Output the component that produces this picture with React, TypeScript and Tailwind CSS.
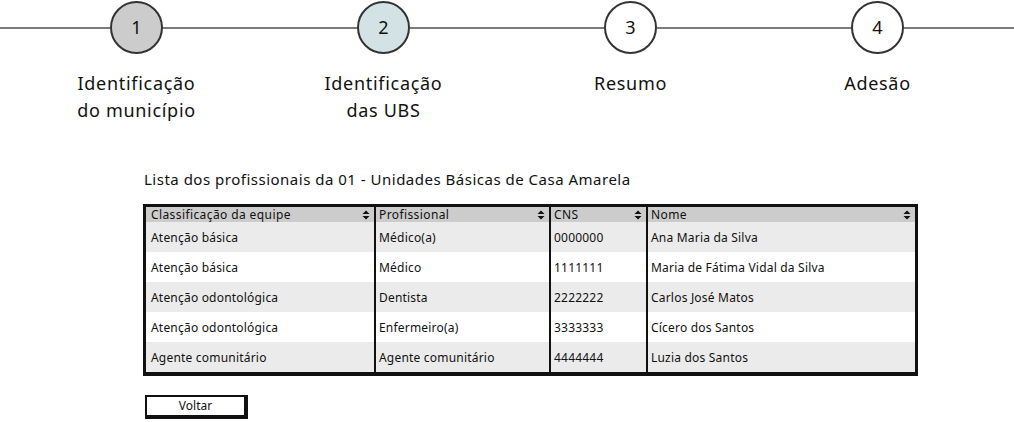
const steps = [
  { n: "1", label: ["Identificação", "do município"], fill: "bg-[#cccccc]" },
  { n: "2", label: ["Identificação", "das UBS"], fill: "bg-[#d3e3e5]" },
  { n: "3", label: ["Resumo"], fill: "bg-white" },
  { n: "4", label: ["Adesão"], fill: "bg-white" },
];

const rows = [
  ["Atenção básica", "Médico(a)", "0000000", "Ana Maria da Silva"],
  ["Atenção básica", "Médico", "1111111", "Maria de Fátima Vidal da Silva"],
  ["Atenção odontológica", "Dentista", "2222222", "Carlos José Matos"],
  ["Atenção odontológica", "Enfermeiro(a)", "3333333", "Cícero dos Santos"],
  ["Agente comunitário", "Agente comunitário", "4444444", "Luzia dos Santos"],
];

const cols = [
  { title: "Classificação da equipe", w: "w-[228px]", pad: "pl-[5px]" },
  { title: "Profissional", w: "w-[175px]", pad: "pl-[3px]" },
  { title: "CNS", w: "w-[97px]", pad: "pl-[3px]" },
  { title: "Nome", w: "flex-1", pad: "pl-[3px]" },
];

function SortIcon() {
  return (
    <svg width="8" height="10" viewBox="0 0 8 10" className="shrink-0">
      <path d="M4 0.5 L7.5 4 L0.5 4 Z" fill="#111" />
      <path d="M4 9.5 L7.5 6 L0.5 6 Z" fill="#111" />
    </svg>
  );
}

function Line() {
  return <div className="h-[2px] flex-1 bg-[#7a7a7a]" />;
}

export default function App() {
  const font = { fontFamily: '"Noto Sans", "DejaVu Sans", sans-serif' };
  return (
    <div className="h-[422px] w-[1014px] overflow-hidden bg-white text-[#111]" style={font}>
      <div className="flex h-[54px] items-center pt-[1px]">
        <div className="h-[2px] w-[110px] bg-[#7a7a7a]" />
        {steps.map((s, i) => (
          <div key={s.n} className="contents">
            <div className={`flex h-[53px] w-[53px] shrink-0 items-center justify-center rounded-full border-2 border-[#333] text-[18px] ${s.fill}`}>
              {s.n}
            </div>
            {i < 3 ? <Line /> : <div className="h-[2px] w-[110px] bg-[#7a7a7a]" />}
          </div>
        ))}
      </div>

      <div className="mt-[16px] grid grid-cols-4 px-[13px]">
        {steps.map((s) => (
          <div key={s.n} className="text-center text-[18px] leading-[27px] tracking-[0.7px]">
            {s.label.map((l) => (
              <div key={l}>{l}</div>
            ))}
          </div>
        ))}
      </div>

      <div className="ml-[144px] mt-[45px] text-[15px] leading-[20px] tracking-[0.5px]">
        Lista dos profissionais da 01 - Unidades Básicas de Casa Amarela
      </div>

      <div className="ml-[143px] mt-[15px] w-[775px] border-[3px] border-b-[4px] border-[#111] text-[12px]">
        <div className="flex h-[15px] bg-[#cccccc] leading-[15px] tracking-[0.4px]">
          {cols.map((c, i) => (
            <div
              key={c.title}
              className={`flex items-center justify-between pr-[4px] ${c.w} ${c.pad} ${i > 0 ? "border-l-2 border-[#111]" : ""}`}
            >
              <span>{c.title}</span>
              <SortIcon />
            </div>
          ))}
        </div>
        {rows.map((r, ri) => (
          <div key={ri} className={`flex h-[30px] tracking-[0.2px] ${ri % 2 === 0 ? "bg-[#ebebeb]" : "bg-white"}`}>
            {r.map((cell, ci) => (
              <div
                key={ci}
                className={`flex items-center pt-[2px] ${cols[ci].w} ${cols[ci].pad} ${ci > 0 ? "border-l-2 border-[#111]" : ""}`}
              >
                {cell}
              </div>
            ))}
          </div>
        ))}
      </div>

      <div className="ml-[145px] mt-[19px] flex h-[24px] w-[103px] items-center justify-center border-2 border-b-[4px] border-r-[4px] border-[#111] bg-white text-[12px]">
        Voltar
      </div>
    </div>
  );
}
